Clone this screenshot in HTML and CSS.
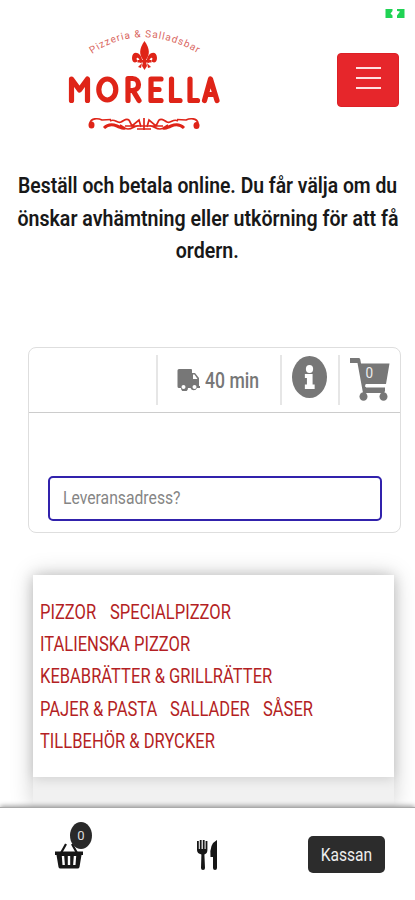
FILE: index.html
```
<!DOCTYPE html>
<html lang="sv">
<head>
<meta charset="utf-8">
<meta name="viewport" content="width=device-width, initial-scale=1">
<title>Morella</title>
<link rel="stylesheet" href="styles.css">
</head>
<body>
<div class="app">
  <svg class="status" viewBox="0 0 20 9"><path fill="#20d354" d="M.5 0h7v2L5.500 4.500l2 2V9h-7zM19.500 0H12v2l3 .5-3 4V9h7.500z"/></svg>
  <header class="header">
    <svg class="logo" viewBox="50 15 190 130">
      <defs><path id="arc" d="M92 54Q143 19 204 57"/></defs>
      <text class="logo-tag"><textPath href="#arc" textLength="112">Pizzeria &amp; Salladsbar</textPath></text>
      <g fill="#df2418">
        <path d="M144.500 41C139 49 139 54 143 60h3c4-6 4-11-1.500-19z"/>
        <path d="M142.500 62c-1-11-10.500-12-10.500-4 0 5 4 5.500 5.500 3-1.500-2-1-4 .5-3 2 1 1.500 4 2 5zM146.500 62c1-11 10.500-12 10.500-4 0 5-4 5.500-5.500 3 1.500-2 1-4-.5-3-2 1-1.500 4-2 5z"/>
        <path d="M137.500 60h14v2.500h-14zM143 62h3l1 4-2.500 4-2.500-4zM142 63l-4 4 3 1zM147 63l4 4-3 1z"/>
      </g>
      <g class="logo-name">
        <path d="M71.500 100.500V79l8 11 8-11v21.500"/>
        <ellipse cx="107.300" cy="89.500" rx="8.500" ry="10.500"/>
        <path d="M128 100.500V78.500h4.500c8 0 8 12 0 12H128m5 0 6 10M161 79h-10v21.500h10m-10-11h8M171.500 79v21.500h8.500M190 79v21.500h7.500M204.500 100.500l6-21.500 6.500 21.500m-10.500-6h8"/>
      </g>
      <ellipse cx="91.500" cy="125" rx="3" ry="3.500" fill="#df2418"/>
      <ellipse cx="196.500" cy="125.500" rx="3" ry="3.500" fill="#df2418"/>
      <g class="logo-rule">
        <path d="M90 123c1-5 8-5 12-3l9-.5M198 123c-1-5-8-5-12-3l-9-.5"/>
        <path stroke-width="3" d="M104 128c3-3 8-4 13-2s5 3 8 2M184 128c-3-3-8-4-13-2s-5 3-8 2"/>
        <path d="M110 121c5-3 7 3 11 1s5-4 8-2M178 121c-5-3-7 3-11 1s-5-4-8-2M120 125c4 2 4 4 8 4 5 0 7-4 11-3M168 125c-4 2-4 4-8 4-5 0-7-4-11-3M129 120l3 6 7-6 2 7M159 120l-3 6-7-6-2 7M125 126h38M144 118v12M137 129h14"/>
      </g>
    </svg>
    <button class="burger" aria-label="Meny"><i></i><i></i><i></i></button>
  </header>
  <h1 class="intro">
    <span class="intro-a">Beställ och betala online. Du får välja om du</span>
    <span class="intro-b">önskar avhämtning eller utkörning för att få</span>
    <span class="intro-c">ordern.</span>
  </h1>
  <section class="order">
    <div class="order-bar">
      <div class="cell cell-empty"></div>
      <div class="cell cell-time">
        <svg class="truck" viewBox="0 0 23 22"><path fill="#777" d="M2 0h12q1 0 1 1v3h3l4 5v8h1v2h-3a3.500 3.500 0 0 1-6.500 0h-2.500a3.500 3.500 0 0 1-7 0H2q-1.500 0-1.500-1.500V1.500Q.500 0 2 0z"/><path fill="#fff" d="M16 5.500h1.500L20.500 10H16z"/><circle cx="6.500" cy="18" r="2" fill="#fff"/><circle cx="17.500" cy="18" r="2" fill="#fff"/></svg>
        <span class="time">40 min</span>
      </div>
      <div class="cell cell-info"><svg class="info" viewBox="0 0 34 42" preserveAspectRatio="none"><ellipse cx="17" cy="21" rx="17" ry="21" fill="#777"/><ellipse cx="17" cy="13" rx="3.500" ry="4" fill="#fff"/><path fill="#fff" d="M12.500 18h7.500v10.500h2V33h-9.500v-4.500h2V22h-2z"/></svg></div>
      <div class="cell cell-cart">
        <svg class="cart" viewBox="0 0 40 44"><path fill="#777" d="M0 0h9q1 0 1.300 1.500L11 5.500h28.500L36 26H15.500l.5 3.500h19V33l-1 2H13L7.500 5H0z"/><ellipse cx="13.500" cy="38.500" rx="4" ry="4.300" fill="#777"/><ellipse cx="33.500" cy="38.500" rx="4" ry="4.300" fill="#777"/><path fill="none" stroke="#fff" stroke-width="1.500" d="M15 28h22"/></svg>
        <span class="cart-count">0</span>
      </div>
    </div>
    <div class="order-body"><div class="address"><span>Leveransadress?</span></div></div>
  </section>
  <main class="menu">
    <nav class="cats">
      <div class="row"><a>PIZZOR</a><a>SPECIALPIZZOR</a></div>
      <div class="row"><a>ITALIENSKA PIZZOR</a></div>
      <div class="row"><a>KEBABRÄTTER &amp; GRILLRÄTTER</a></div>
      <div class="row"><a>PAJER &amp; PASTA</a><a>SALLADER</a><a>SÅSER</a></div>
      <div class="row"><a>TILLBEHÖR &amp; DRYCKER</a></div>
    </nav>
  </main>
  <footer class="dock">
    <div class="dock-basket">
      <svg class="basket" viewBox="0 0 28 27"><path fill="none" stroke="#171717" stroke-width="2.200" d="M6 11l5-9M22 11l-5-9"/><path fill="#171717" d="M0 9.500h28V13h-1.500l-2 12q-.3 1.500-2 1.500h-17q-1.700 0-2-1.500l-2-12H0z"/><path stroke="#fff" stroke-width="2.400" d="M8 14l.7 9M14 14v9M20 14l-.7 9"/></svg>
      <span class="badge">0</span>
    </div>
    <svg class="cutlery" viewBox="0 0 21 30"><path fill="#171717" d="M0 1h1.800v8h1V0h1.800v9h1.200V0h1.800v9h1V1h1.800v9q0 3.500-3 4.500l.6 13.500q0 2-2 2t-2-2l.4-13.500Q0 13.500 0 10zM20 0v28q0 2-2 2t-2-2V17h-2.500Q12 4 20 0z"/></svg>
    <button class="checkout"><span>Kassan</span></button>
  </footer>
</div>
</body>
</html>
```
FILE: styles.css
```
* { box-sizing: border-box; }
body { margin: 0; background: #fff; font-family: Roboto, sans-serif; }
.app { position: relative; display: flex; flex-direction: column; height: 900px; overflow: hidden; }
.status { position: absolute; left: 385px; top: 9px; width: 20px; height: 9px; }
.header { flex: none; display: flex; justify-content: space-between; align-items: flex-start; height: 169px; padding: 15px 16px 0 50px; }
.logo { width: 190px; height: 130px; }
.logo-tag { font: 400 10px Roboto, sans-serif; fill: #d9665e; }
.logo-name { fill: none; stroke: #df2418; stroke-width: 5.200; stroke-linecap: round; stroke-linejoin: round; }
.logo-rule { fill: none; stroke: #df2418; stroke-width: 1.700; }
.burger { display: flex; flex-direction: column; align-items: center; gap: 8px; width: 62px; height: 54px; margin-top: 38px; padding: 13px 0 0; border: 1px solid #dc2026; border-radius: 4px; background: #e6262b; }
.burger i { width: 25px; height: 2px; background: #ffe1e1; }
.intro { display: flex; flex-direction: column; align-items: center; flex: none; height: 178px; margin: 0; font-size: 22.500px; line-height: 32.500px; font-weight: 600; color: #181818; }
.intro span { white-space: nowrap; flex: none; }
.intro-a { transform: scaleX(.859); }
.intro-b, .intro-c { transform: scaleX(.87); }
.order { flex: none; width: 373px; height: 186px; margin-left: 28px; border: 1.500px solid #dedede; border-radius: 8px; }
.order-bar { display: flex; align-items: center; height: 65px; border-bottom: 1px solid #ccc; }
.cell { display: flex; align-items: center; height: 50px; border-right: 2px solid #e6e6e6; }
.cell-empty { width: 129px; }
.cell-time { width: 124px; padding-left: 19px; gap: 5px; }
.truck { flex: none; width: 23px; height: 22px; }
.time { flex: none; transform: scaleX(.8); transform-origin: left; white-space: nowrap; font-size: 22px; font-weight: 500; color: #777; }
.cell-info { width: 58px; justify-content: center; padding: 0 1px 6px 0; }
.info { width: 35px; height: 42px; }
.cell-cart { position: relative; border: 0; padding-left: 10px; }
.cart { width: 40px; height: 44px; }
.cart-count { position: absolute; left: 25px; top: 9px; transform: scaleX(.9); font-size: 15px; color: #eee; }
.order-body { padding: 63px 18px 0 19px; }
.address { display: flex; align-items: center; height: 45px; padding: 0 0 2px 13px; border: 2px solid #3122ac; border-radius: 5px; }
.address span { transform: scaleX(.85); transform-origin: left; white-space: nowrap; font-size: 18.500px; color: #858585; }
.menu { flex: none; width: 361px; height: 232px; margin: 42px 0 0 33px; background: #f1f1f1; box-shadow: 0 0 22px rgba(0,0,0,.2); }
.cats { height: 202px; padding: 20.500px 0 0 7px; background: #fff; box-shadow: 0 1px 12px rgba(0,0,0,.16); }
.row { display: grid; grid-template-columns: 70px 1fr; height: 32.400px; line-height: 32.400px; }
.row:nth-child(4) { grid-template-columns: 130px 93px 1fr; }
.row a { transform: scaleX(.827); transform-origin: left; white-space: nowrap; font-size: 20px; color: #b41f24; }
.dock { position: relative; flex: none; display: flex; height: 93px; background: #fff; border-top: 1px solid #aaa; box-shadow: 0 -1px 5px rgba(0,0,0,.4); }
.dock-basket { position: relative; width: 197px; padding: 34px 0 0 55px; }
.basket { display: block; width: 28px; height: 27px; }
.badge { position: absolute; left: 70px; top: 14px; width: 22px; height: 27px; border-radius: 50%; background: #292929; color: #ddd; font-size: 13px; line-height: 27px; text-align: center; }
.cutlery { width: 21px; height: 30px; margin-top: 32px; }
.checkout { display: flex; align-items: center; justify-content: center; width: 77px; height: 37px; margin: 28px 0 0 90px; padding: 0; border: 0; border-radius: 5px; background: #2c2c2c; }
.checkout span { transform: scaleX(.82); font: 400 19px Roboto, sans-serif; color: #eee; }
```
